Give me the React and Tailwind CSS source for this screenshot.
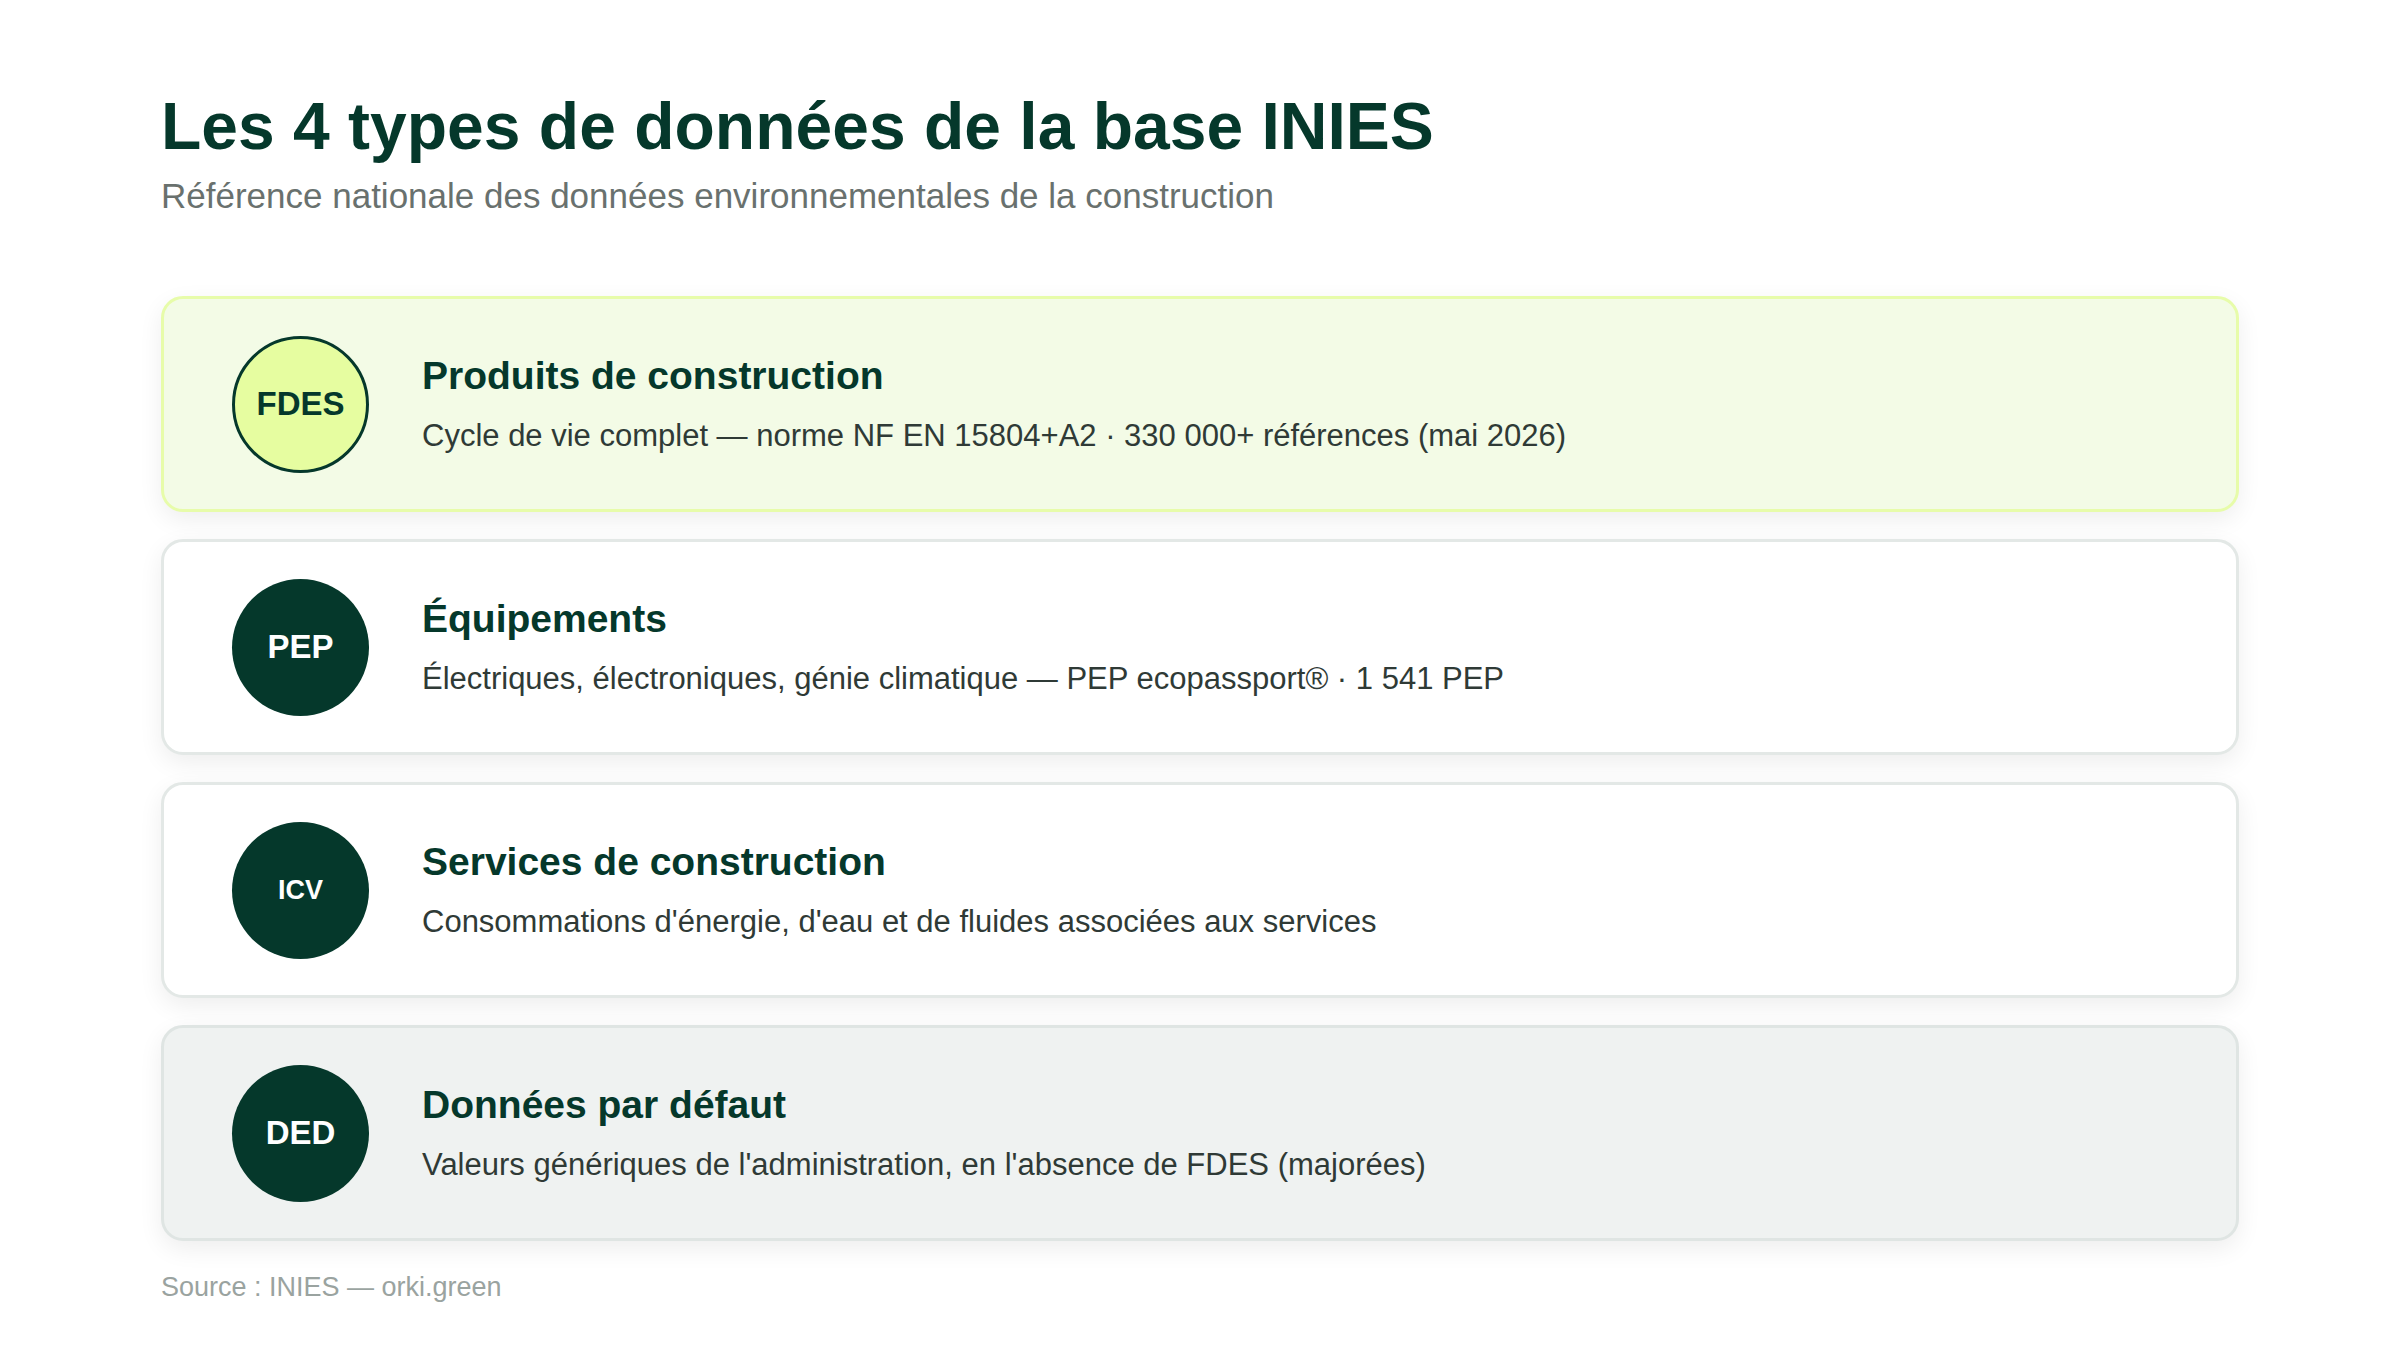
const cards = [
  { abbr: "FDES", title: "Produits de construction", desc: "Cycle de vie complet — norme NF EN 15804+A2 · 330 000+ références (mai 2026)", kind: "hi", small: false },
  { abbr: "PEP", title: "Équipements", desc: "Électriques, électroniques, génie climatique — PEP ecopassport® · 1 541 PEP", kind: "w", small: false },
  { abbr: "ICV", title: "Services de construction", desc: "Consommations d'énergie, d'eau et de fluides associées aux services", kind: "w", small: true },
  { abbr: "DED", title: "Données par défaut", desc: "Valeurs génériques de l'administration, en l'absence de FDES (majorées)", kind: "g", small: false },
];

export default function App() {
  return (
    <div className="w-[2400px] h-[1350px] bg-white px-[161px] pt-[88px]" style={{ fontFamily: '"Liberation Sans", Arial, sans-serif' }}>
      <h1 className="text-[66px] font-bold text-[#05382b] leading-[76px]">Les 4 types de données de la base INIES</h1>
      <p className="text-[35px] text-[#69716e] leading-[44px] mt-[10px]">Référence nationale des données environnementales de la construction</p>
      <div className="mt-[78px] flex flex-col gap-[27px]">
        {cards.map((c) => (
          <div key={c.abbr} className={
            "h-[216px] rounded-[22px] border-[3px] flex items-center pl-[68px] shadow-[0_8px_24px_rgba(0,0,0,0.07)] " +
            (c.kind === "hi" ? "bg-[#f3fbe6] border-[#e7fcaa]" : c.kind === "g" ? "bg-[#eff2f1] border-[#dfe5e3]" : "bg-white border-[#e3e8e6]")
          }>
            <div className={
              "w-[137px] h-[137px] rounded-full flex items-center justify-center font-bold shrink-0 " +
              (c.kind === "hi" ? "bg-[#e6fda0] border-[3px] border-[#05382b] text-[#05382b]" : "bg-[#05382b] text-white") + " " +
              (c.small ? "text-[27px]" : "text-[33px]")
            }>{c.abbr}</div>
            <div className="ml-[53px] flex flex-col">
              <div className="text-[39px] font-bold text-[#05382b] leading-[48px]">{c.title}</div>
              <div className="text-[31px] text-[#2f3a36] leading-[40px] mt-[16px]">{c.desc}</div>
            </div>
          </div>
        ))}
      </div>
      <div className="mt-[26px] text-[27px] text-[#9aa3a0]">Source : INIES — orki.green</div>
    </div>
  );
}
